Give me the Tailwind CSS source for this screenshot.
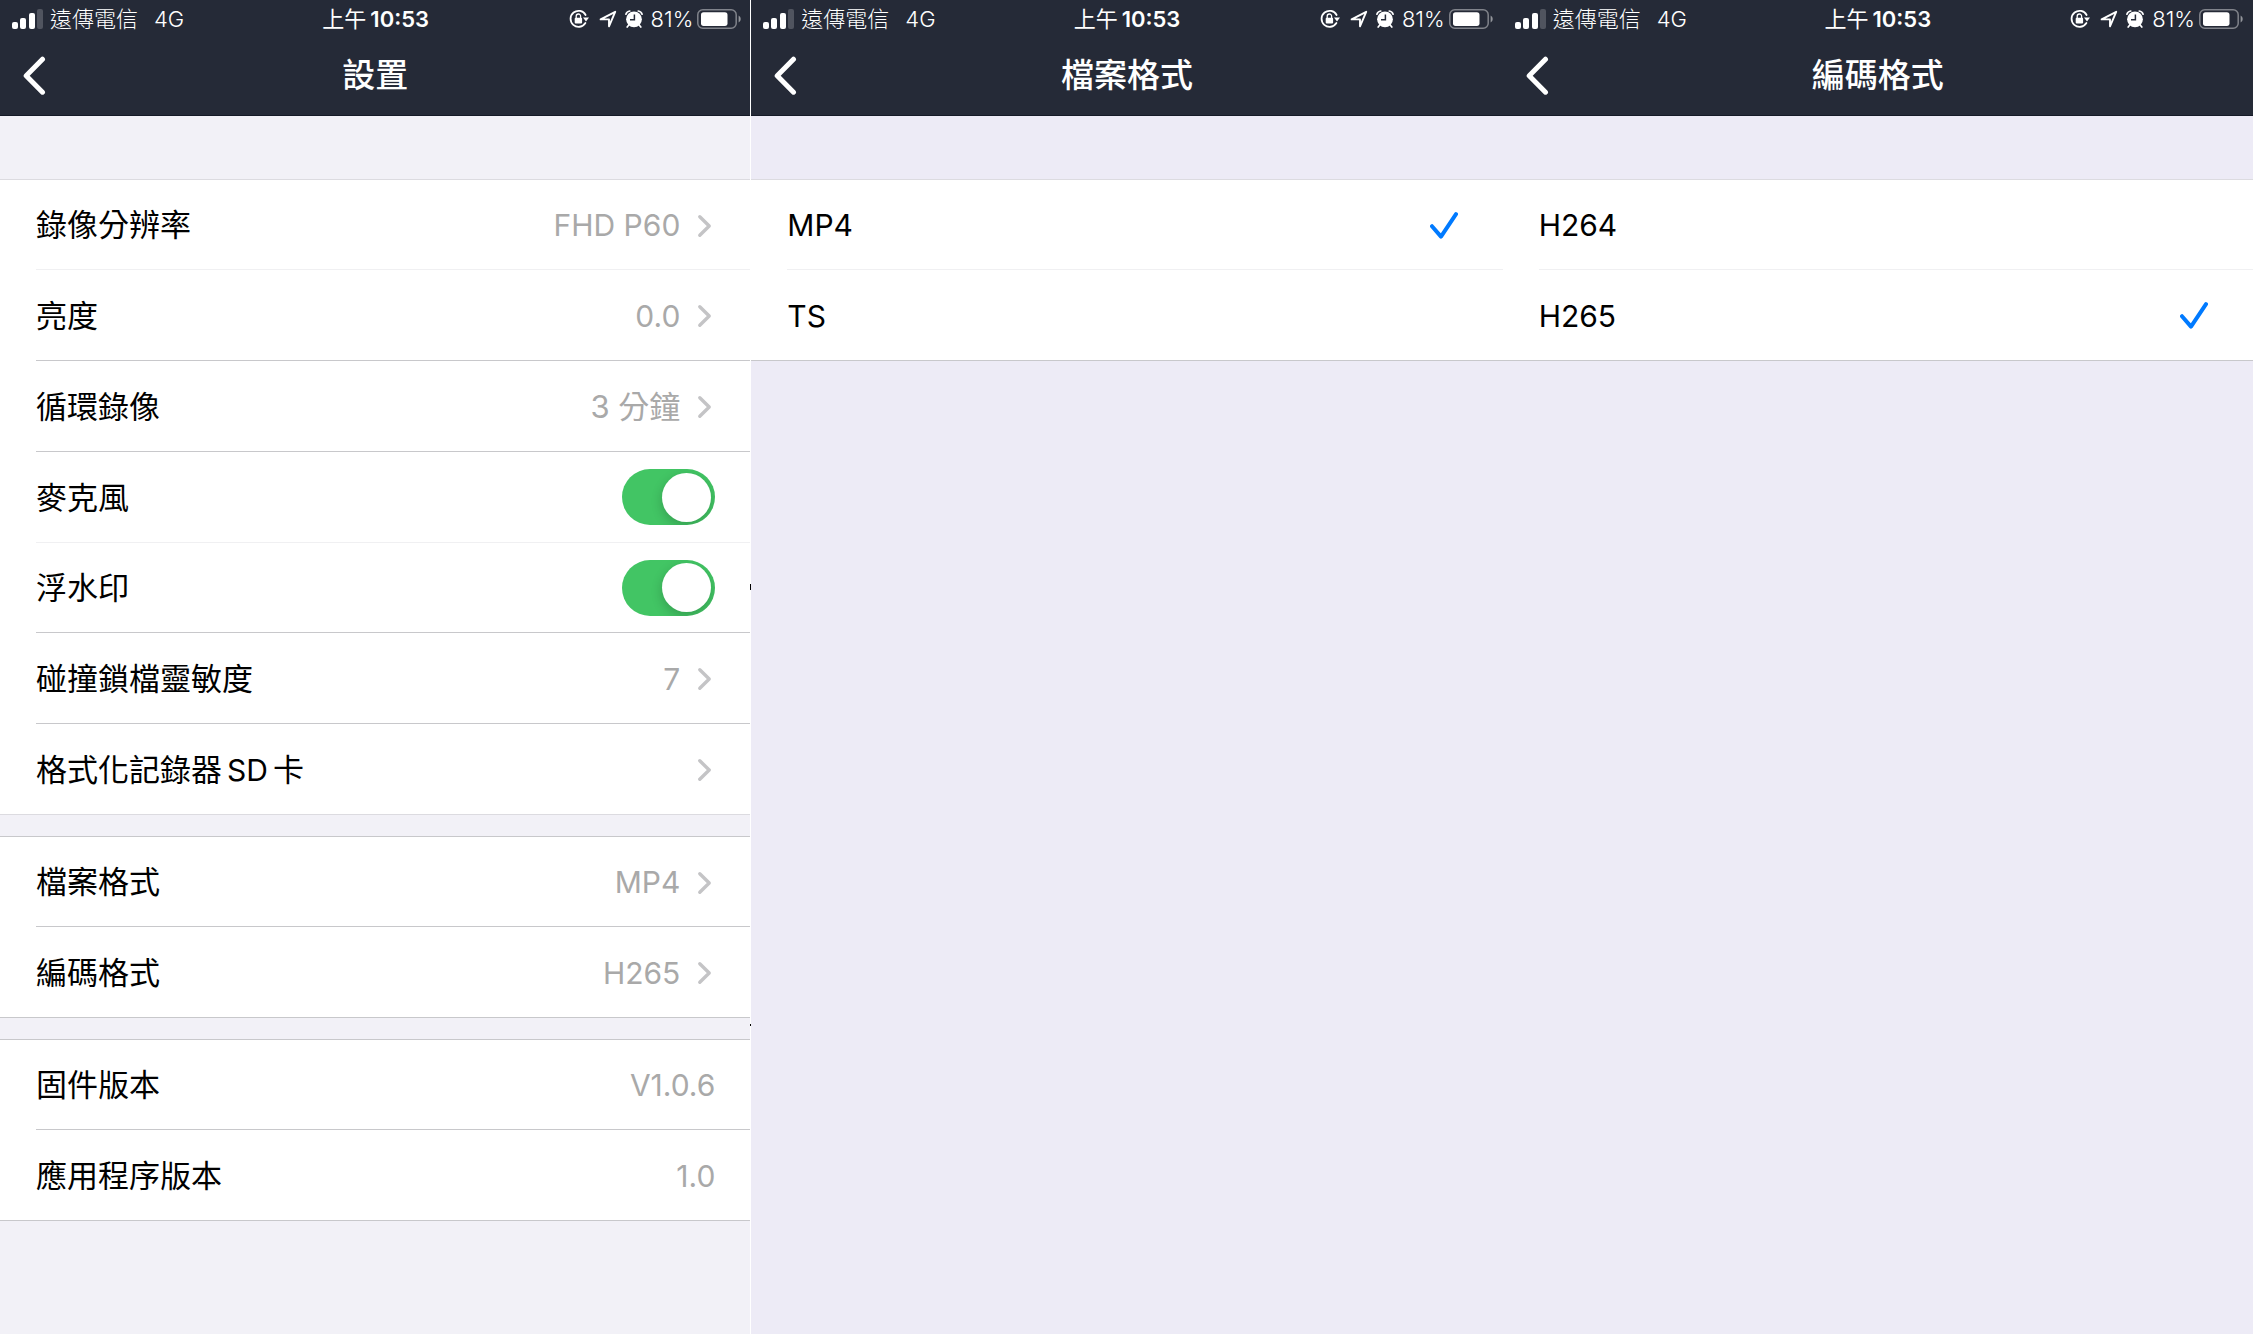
<!DOCTYPE html>
<html lang="zh-Hant">
<head>
    <meta charset="UTF-8">
    <meta name="viewport" content="width=device-width, initial-scale=1.0">
    <title>設置</title>
    <script src="https://cdn.jsdelivr.net/npm/@tailwindcss/browser@4"></script>
</head>
<body class="bg-white text-black font-['Inter','Noto_Sans_CJK_TC',sans-serif]">

    <!-- icons -->
    <svg class="hidden">
        <symbol id="signal" viewBox="0 0 32 20">
            <rect x="0" y="13" width="6" height="7" rx="2" fill="#fff"/>
            <rect x="8" y="9" width="6" height="11" rx="2" fill="#fff"/>
            <rect x="17" y="4" width="6" height="16" rx="2" fill="#fff"/>
            <rect x="25" y="0" width="6" height="20" rx="2" fill="#fff" fill-opacity=".2"/>
        </symbol>
        <symbol id="lock" viewBox="0 0 20 20">
            <path d="M16.6 6A8 8 0 1 0 16.4 14" fill="none" stroke="#fff" stroke-width="1.8" stroke-linecap="round"/>
            <path d="M14 8.5h6L17 12.6z" fill="#fff"/>
            <rect x="5.7" y="8.8" width="7.4" height="5.6" rx="1" fill="#fff"/>
            <path d="M7.2 9V7.2a2.2 2.2 0 0 1 4.4 0V9" fill="none" stroke="#fff" stroke-width="1.3"/>
        </symbol>
        <symbol id="arrow" viewBox="0 0 18 18">
            <path d="M1.6 9.4L16.2 1.8 10 16.3V9.4z" fill="none" stroke="#fff" stroke-width="1.9" stroke-linejoin="round"/>
        </symbol>
        <symbol id="alarm" viewBox="0 0 18 18">
            <circle cx="9" cy="9.3" r="7.9" fill="#fff"/>
            <path d="M.9 4.2A4.6 4.6 0 0 1 4.8 1M17.1 4.2A4.6 4.6 0 0 0 13.2 1M3.8 15l-1.6 2M14.2 15l1.6 2" fill="none" stroke="#fff" stroke-width="1.7" stroke-linecap="round"/>
            <path d="M9.4 4.6v5.2H5" fill="none" stroke="#252a37" stroke-width="1.5"/>
        </symbol>
        <symbol id="battery" viewBox="0 0 44 20">
            <rect x=".8" y=".8" width="38.4" height="18.4" rx="5" fill="none" stroke="#fff" stroke-opacity=".42" stroke-width="1.5"/>
            <rect x="4" y="3.3" width="26.5" height="13.6" rx="2.6" fill="#fff"/>
            <path d="M41.6 6.6c2.8 1.4 2.8 5.4 0 6.8z" fill="#fff" fill-opacity=".5"/>
        </symbol>
        <symbol id="back" viewBox="0 0 24 40">
            <path d="M20.5 3.2L4.2 19.7 20.5 36.2" fill="none" stroke="#fff" stroke-width="5" stroke-linecap="round" stroke-linejoin="round"/>
        </symbol>
        <symbol id="chevron" viewBox="0 0 16 24">
            <path d="M2.8 2.8l9.4 9.2-9.4 9.2" fill="none" stroke="#c4c4c6" stroke-width="3.4" stroke-linecap="round" stroke-linejoin="round"/>
        </symbol>
        <symbol id="check" viewBox="0 0 28 28">
            <path d="M2 14.2l9 10.4L26 2.2" fill="none" stroke="#007aff" stroke-width="4" stroke-linecap="round" stroke-linejoin="round"/>
        </symbol>
    </svg>

    <div class="grid grid-cols-3 min-h-screen">

        <!-- settings -->
        <section class="relative bg-[#f2f1f7] border-r border-white">
            <header class="bg-[#252a37] text-white border-b border-[#151a27] pb-px">
                <div class="grid grid-cols-[1fr_auto_1fr] items-center h-[38px] pl-3 pr-[9px] text-[22px]">
                    <div class="flex items-center">
                        <svg class="w-8 h-5 mr-1.5"><use href="#signal"/></svg>
                        <span class="font-light">遠傳電信</span>
                        <span class="font-light ml-4">4G</span>
                    </div>
                    <div class="flex items-center gap-1 pr-0.5"><span>上午</span><span class="font-semibold">10:53</span></div>
                    <div class="flex items-center justify-end">
                        <svg class="w-5 h-5 mr-[10px]"><use href="#lock"/></svg>
                        <svg class="w-[18px] h-[18px] mr-2"><use href="#arrow"/></svg>
                        <svg class="w-[18px] h-[18px] mr-2"><use href="#alarm"/></svg>
                        <span class="font-light mr-1">81%</span>
                        <svg class="w-11 h-5"><use href="#battery"/></svg>
                    </div>
                </div>
                <div class="grid grid-cols-[1fr_auto_1fr] items-center h-[76px] px-[22px]">
                    <button type="button" aria-label="返回" class="justify-self-start"><svg class="w-6 h-10"><use href="#back"/></svg></button>
                    <h1 class="text-[33px] font-medium">設置</h1>
                </div>
            </header>

            <div class="bg-white border-t border-b border-[#dcdbe0] mt-[63px]">
                <a href="#" class="flex items-center h-[90px] ml-9 pt-0.5 pr-[37px] border-b border-[#f0f0f2]">
                    <span class="text-[31px]">錄像分辨率</span>
                    <span class="ml-auto text-[30px] text-[#a9a9a9]">FHD P60</span>
                    <svg class="w-4 h-6 ml-[17px]"><use href="#chevron"/></svg>
                </a>
                <a href="#" class="flex items-center h-[91px] ml-9 pt-0.5 pr-[37px] border-b border-[#c8c8cb]">
                    <span class="text-[31px]">亮度</span>
                    <span class="ml-auto text-[30px] text-[#a9a9a9]">0.0</span>
                    <svg class="w-4 h-6 ml-[17px]"><use href="#chevron"/></svg>
                </a>
                <a href="#" class="flex items-center h-[91px] ml-9 pt-0.5 pr-[37px] border-b border-[#c8c8cb]">
                    <span class="text-[31px]">循環錄像</span>
                    <span class="ml-auto text-[31px] text-[#a9a9a9]">3 分鐘</span>
                    <svg class="w-4 h-6 ml-[17px]"><use href="#chevron"/></svg>
                </a>
                <div class="flex items-center h-[91px] ml-9 pr-[35px] border-b border-[#f0f0f2]">
                    <label for="mic" class="pt-0.5 text-[31px]">麥克風</label>
                    <input type="checkbox" id="mic" checked class="appearance-none ml-auto flex items-center w-[93px] h-14 px-1 rounded-full overflow-hidden bg-gray-200 checked:bg-[#42c564] checked:justify-end before:block before:size-[49px] before:rounded-full before:bg-white before:shadow-[0_4px_12px_rgba(0,0,0,0.2)]">
                </div>
                <div class="flex items-center h-[90px] ml-9 pr-[35px] border-b border-[#c8c8cb]">
                    <label for="watermark" class="pt-0.5 text-[31px]">浮水印</label>
                    <input type="checkbox" id="watermark" checked class="appearance-none ml-auto flex items-center w-[93px] h-14 px-1 rounded-full overflow-hidden bg-gray-200 checked:bg-[#42c564] checked:justify-end before:block before:size-[49px] before:rounded-full before:bg-white before:shadow-[0_4px_12px_rgba(0,0,0,0.2)]">
                </div>
                <a href="#" class="flex items-center h-[91px] ml-9 pt-0.5 pr-[37px] border-b border-[#c8c8cb]">
                    <span class="text-[31px]">碰撞鎖檔靈敏度</span>
                    <span class="ml-auto text-[30px] text-[#a9a9a9]">7</span>
                    <svg class="w-4 h-6 ml-[17px]"><use href="#chevron"/></svg>
                </a>
                <a href="#" class="flex items-center h-[90px] ml-9 pt-0.5 pr-[37px]">
                    <span class="flex items-center gap-[5px] text-[31px]">格式化記錄器<span class="text-[30px]">SD</span>卡</span>
                    <svg class="w-4 h-6 ml-auto"><use href="#chevron"/></svg>
                </a>
            </div>

            <div class="bg-white border-y border-[#c8c8cb] mt-[21px]">
                <a href="#" class="flex items-center h-[90px] ml-9 pt-0.5 pr-[37px] border-b border-[#c8c8cb]">
                    <span class="text-[31px]">檔案格式</span>
                    <span class="ml-auto text-[30px] text-[#a9a9a9]">MP4</span>
                    <svg class="w-4 h-6 ml-[17px]"><use href="#chevron"/></svg>
                </a>
                <a href="#" class="flex items-center h-[90px] ml-9 pt-0.5 pr-[37px]">
                    <span class="text-[31px]">編碼格式</span>
                    <span class="ml-auto text-[30px] text-[#a9a9a9]">H265</span>
                    <svg class="w-4 h-6 ml-[17px]"><use href="#chevron"/></svg>
                </a>
            </div>

            <div class="bg-white border-y border-[#c8c8cb] mt-[21px]">
                <div class="flex items-center h-[90px] ml-9 pt-0.5 pr-[35px] border-b border-[#c8c8cb]">
                    <span class="text-[31px]">固件版本</span>
                    <span class="ml-auto text-[30px] text-[#a9a9a9]">V1.0.6</span>
                </div>
                <div class="flex items-center h-[90px] ml-9 pt-0.5 pr-[35px]">
                    <span class="text-[31px]">應用程序版本</span>
                    <span class="ml-auto text-[30px] text-[#a9a9a9]">1.0</span>
                </div>
            </div>

            <!-- marks on the divider -->
            <i class="absolute -right-px top-[584px] w-px h-1.5 bg-black"></i>
            <i class="absolute -right-px top-[1024px] w-px h-0.5 bg-black"></i>
        </section>

        <!-- file format -->
        <section class="bg-[#edebf6]">
            <header class="bg-[#252a37] text-white border-b border-[#151a27] pb-px">
                <div class="grid grid-cols-[1fr_auto_1fr] items-center h-[38px] pl-3 pr-[10px] text-[22px]">
                    <div class="flex items-center">
                        <svg class="w-8 h-5 mr-1.5"><use href="#signal"/></svg>
                        <span class="font-light">遠傳電信</span>
                        <span class="font-light ml-4">4G</span>
                    </div>
                    <div class="flex items-center gap-1 pr-0.5"><span>上午</span><span class="font-semibold">10:53</span></div>
                    <div class="flex items-center justify-end">
                        <svg class="w-5 h-5 mr-[10px]"><use href="#lock"/></svg>
                        <svg class="w-[18px] h-[18px] mr-2"><use href="#arrow"/></svg>
                        <svg class="w-[18px] h-[18px] mr-2"><use href="#alarm"/></svg>
                        <span class="font-light mr-1">81%</span>
                        <svg class="w-11 h-5"><use href="#battery"/></svg>
                    </div>
                </div>
                <div class="grid grid-cols-[1fr_auto_1fr] items-center h-[76px] px-[22px]">
                    <button type="button" aria-label="返回" class="justify-self-start"><svg class="w-6 h-10"><use href="#back"/></svg></button>
                    <h1 class="text-[33px] font-medium">檔案格式</h1>
                </div>
            </header>

            <div class="bg-white border-t border-b border-t-[#dcdbe0] border-b-[#c8c8cb] mt-[63px]">
                <label class="flex items-center h-[90px] ml-9 pt-0.5 pr-[45px] border-b border-[#f0f0f2]">
                    <input type="radio" name="file" checked class="peer sr-only">
                    <span class="mr-auto text-[30px]">MP4</span>
                    <svg class="size-7 invisible peer-checked:visible"><use href="#check"/></svg>
                </label>
                <label class="flex items-center h-[90px] ml-9 pt-0.5 pr-[45px]">
                    <input type="radio" name="file" class="peer sr-only">
                    <span class="mr-auto text-[30px]">TS</span>
                    <svg class="size-7 invisible peer-checked:visible"><use href="#check"/></svg>
                </label>
            </div>
        </section>

        <!-- encoding format -->
        <section class="bg-[#edebf6] border-r border-white">
            <header class="bg-[#252a37] text-white border-b border-[#151a27] pb-px">
                <div class="grid grid-cols-[1fr_auto_1fr] items-center h-[38px] pl-3 pr-[10px] text-[22px]">
                    <div class="flex items-center">
                        <svg class="w-8 h-5 mr-1.5"><use href="#signal"/></svg>
                        <span class="font-light">遠傳電信</span>
                        <span class="font-light ml-4">4G</span>
                    </div>
                    <div class="flex items-center gap-1 pr-0.5"><span>上午</span><span class="font-semibold">10:53</span></div>
                    <div class="flex items-center justify-end">
                        <svg class="w-5 h-5 mr-[10px]"><use href="#lock"/></svg>
                        <svg class="w-[18px] h-[18px] mr-2"><use href="#arrow"/></svg>
                        <svg class="w-[18px] h-[18px] mr-2"><use href="#alarm"/></svg>
                        <span class="font-light mr-1">81%</span>
                        <svg class="w-11 h-5"><use href="#battery"/></svg>
                    </div>
                </div>
                <div class="grid grid-cols-[1fr_auto_1fr] items-center h-[76px] px-[22px]">
                    <button type="button" aria-label="返回" class="justify-self-start"><svg class="w-6 h-10"><use href="#back"/></svg></button>
                    <h1 class="text-[33px] font-medium">編碼格式</h1>
                </div>
            </header>

            <div class="bg-white border-t border-b border-t-[#dcdbe0] border-b-[#c8c8cb] mt-[63px]">
                <label class="flex items-center h-[90px] ml-9 pt-0.5 pr-[45px] border-b border-[#f0f0f2]">
                    <input type="radio" name="codec" class="peer sr-only">
                    <span class="mr-auto text-[30px]">H264</span>
                    <svg class="size-7 invisible peer-checked:visible"><use href="#check"/></svg>
                </label>
                <label class="flex items-center h-[90px] ml-9 pt-0.5 pr-[45px]">
                    <input type="radio" name="codec" checked class="peer sr-only">
                    <span class="mr-auto text-[30px]">H265</span>
                    <svg class="size-7 invisible peer-checked:visible"><use href="#check"/></svg>
                </label>
            </div>
        </section>

    </div>

</body>
</html>
